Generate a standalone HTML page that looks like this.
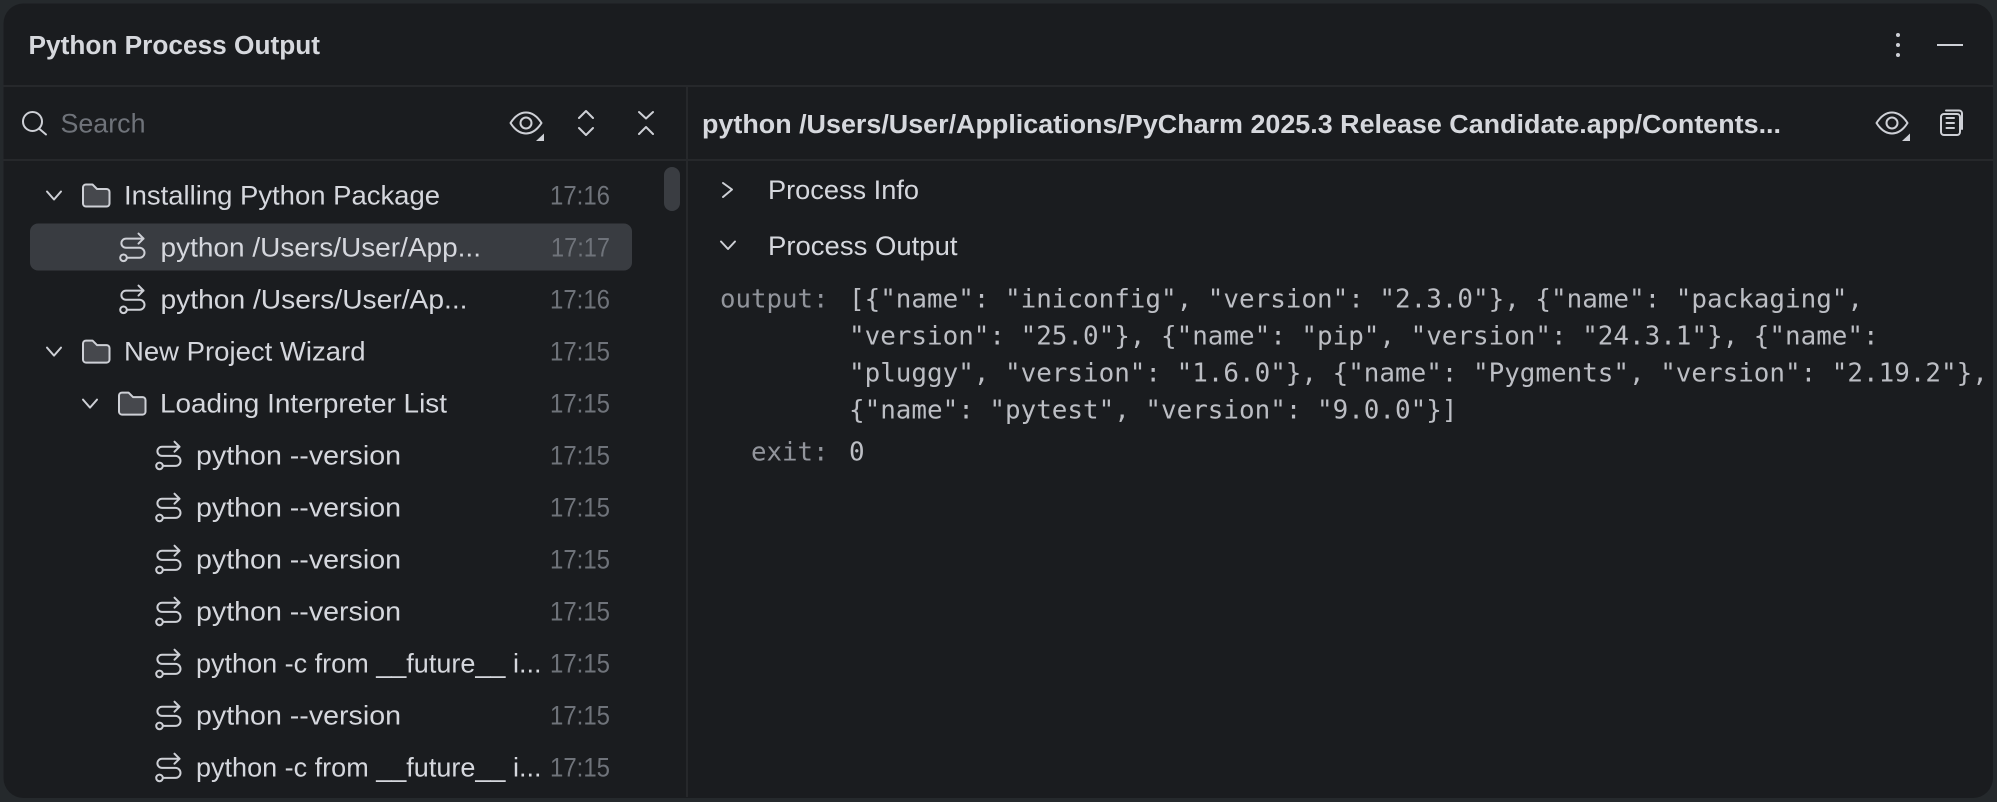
<!DOCTYPE html>
<html><head><meta charset="utf-8"><title>Python Process Output</title>
<style>
html,body{margin:0;padding:0;width:1997px;height:802px;overflow:hidden;background:#25292c}
svg{display:block}
text{font-family:"Liberation Sans",sans-serif;font-size:27px;fill:#d5d7dd;white-space:pre}
.t{fill:#6f737a}
.b{font-weight:700;fill:#d6d8dd;font-size:25.5px}
.m{font-family:"DejaVu Sans Mono",monospace;font-size:25.9px;fill:#bcbec4}
.l{fill:#92959c}
.i{fill:none;stroke:#ced0d6;stroke-width:2;stroke-linecap:round;stroke-linejoin:round}
</style></head><body>
<svg width="1997" height="802" viewBox="0 0 1997 802" xmlns="http://www.w3.org/2000/svg">
<defs>
<g id="folder"><path d="M86 -20H92.500L97 -15.500H106.500a3 3 0 0 1 3 3V-1a3 3 0 0 1 -3 3H86a3 3 0 0 1 -3 -3V-17a3 3 0 0 1 3 -3Z" fill="#46484d" stroke="#ced0d6" stroke-width="2" stroke-linejoin="round"/></g>
<g id="chev"><path class="i" d="M47 -13L54 -5L61 -13"/></g>
<g id="proc"><path class="i" d="M143.500 -18H126a4.600 4.600 0 0 0 0 9.200H139.500a5 5 0 0 1 0 10H127"/><path class="i" d="M138.500 -23L143.500 -18L138.500 -13"/><circle class="i" cx="123.500" cy="1.200" r="3.300"/></g>
<g id="eye"><path class="i" d="M-15.500 0C-11 -7 -6 -10.500 0 -10.500S11 -7 15.500 0C11 7 6 10.500 0 10.500S-11 7 -15.500 0Z"/><circle class="i" cx="0" cy="0" r="5.500"/><path d="M18 10.500V18H10Z" fill="#ced0d6"/></g>
</defs>

<rect x="3.500" y="3.500" width="1989.500" height="794.500" rx="20" fill="#1a1c1f"/>
<rect x="3.500" y="85" width="1989.500" height="2" fill="#26282b"/>
<rect x="3.500" y="159" width="1989.500" height="2" fill="#26282b"/>
<rect x="686" y="86" width="2" height="711" fill="#26282b"/>

<text class="b" x="28.500" y="54" textLength="291.500" lengthAdjust="spacingAndGlyphs">Python Process Output</text>
<circle cx="1898" cy="35" r="2" fill="#ced0d6"/><circle cx="1898" cy="45" r="2" fill="#ced0d6"/><circle cx="1898" cy="55" r="2" fill="#ced0d6"/>
<rect x="1937" y="44" width="26" height="2" fill="#ced0d6"/>

<circle class="i" cx="32.500" cy="121.500" r="9.500"/><path class="i" d="M39.500 129L46 134.500"/>
<text class="t" x="60.500" y="132.500" textLength="85" lengthAdjust="spacingAndGlyphs">Search</text>
<use href="#eye" x="526" y="123"/>
<path class="i" d="M579 118L586 111L593 118M579 128L586 135L593 128"/>
<path class="i" d="M639 112L646 118.500L653 112M639 134L646 127L653 134"/>

<text class="b" x="702" y="133" textLength="1079" lengthAdjust="spacingAndGlyphs">python /Users/User/Applications/PyCharm 2025.3 Release Candidate.app/Contents...</text>
<use href="#eye" x="1892" y="123"/>
<rect class="i" x="1941" y="114" width="19" height="21" rx="3"/>
<path class="i" d="M1946 110.500H1959a3 3 0 0 1 3 3V129M1946.500 118H1954M1946.500 123H1954M1946.500 128H1954"/>

<rect x="30" y="223.500" width="602" height="47" rx="8" fill="#393c41"/>
<rect x="664" y="167" width="16" height="44" rx="8" fill="#3a3d42"/>

<use href="#chev" y="204.500"/><use href="#folder" y="204.500"/>
<text x="124" y="204.500" textLength="316" lengthAdjust="spacingAndGlyphs">Installing Python Package</text>
<text class="t" x="550" y="204.500" textLength="60" lengthAdjust="spacingAndGlyphs">17:16</text>

<use href="#proc" y="256.600"/>
<text x="160.500" y="256.600" textLength="320.500" lengthAdjust="spacingAndGlyphs">python /Users/User/App...</text>
<text class="t" x="551" y="256.600" textLength="59" lengthAdjust="spacingAndGlyphs">17:17</text>

<use href="#proc" y="308.600"/>
<text x="160.500" y="308.600" textLength="307" lengthAdjust="spacingAndGlyphs">python /Users/User/Ap...</text>
<text class="t" x="550" y="308.600" textLength="60" lengthAdjust="spacingAndGlyphs">17:16</text>

<use href="#chev" y="360.600"/><use href="#folder" y="360.600"/>
<text x="124" y="360.600" textLength="241.500" lengthAdjust="spacingAndGlyphs">New Project Wizard</text>
<text class="t" x="550" y="360.600" textLength="60" lengthAdjust="spacingAndGlyphs">17:15</text>

<use href="#chev" x="36" y="412.600"/><use href="#folder" x="36" y="412.600"/>
<text x="160" y="412.600" textLength="287" lengthAdjust="spacingAndGlyphs">Loading Interpreter List</text>
<text class="t" x="550" y="412.600" textLength="60" lengthAdjust="spacingAndGlyphs">17:15</text>

<use href="#proc" x="36" y="464.700"/>
<text x="196" y="464.700" textLength="205" lengthAdjust="spacingAndGlyphs">python --version</text>
<text class="t" x="550" y="464.700" textLength="60" lengthAdjust="spacingAndGlyphs">17:15</text>

<use href="#proc" x="36" y="516.700"/>
<text x="196" y="516.700" textLength="205" lengthAdjust="spacingAndGlyphs">python --version</text>
<text class="t" x="550" y="516.700" textLength="60" lengthAdjust="spacingAndGlyphs">17:15</text>

<use href="#proc" x="36" y="568.700"/>
<text x="196" y="568.700" textLength="205" lengthAdjust="spacingAndGlyphs">python --version</text>
<text class="t" x="550" y="568.700" textLength="60" lengthAdjust="spacingAndGlyphs">17:15</text>

<use href="#proc" x="36" y="620.700"/>
<text x="196" y="620.700" textLength="205" lengthAdjust="spacingAndGlyphs">python --version</text>
<text class="t" x="550" y="620.700" textLength="60" lengthAdjust="spacingAndGlyphs">17:15</text>

<use href="#proc" x="36" y="672.700"/>
<text x="196" y="672.700" textLength="345.500" lengthAdjust="spacingAndGlyphs">python -c from __future__ i...</text>
<text class="t" x="550" y="672.700" textLength="60" lengthAdjust="spacingAndGlyphs">17:15</text>

<use href="#proc" x="36" y="724.700"/>
<text x="196" y="724.700" textLength="205" lengthAdjust="spacingAndGlyphs">python --version</text>
<text class="t" x="550" y="724.700" textLength="60" lengthAdjust="spacingAndGlyphs">17:15</text>

<use href="#proc" x="36" y="776.700"/>
<text x="196" y="776.700" textLength="345.500" lengthAdjust="spacingAndGlyphs">python -c from __future__ i...</text>
<text class="t" x="550" y="776.700" textLength="60" lengthAdjust="spacingAndGlyphs">17:15</text>

<path class="i" d="M723 183L732 189.500L723 197"/>
<text x="768" y="199" textLength="151" lengthAdjust="spacingAndGlyphs">Process Info</text>
<path class="i" d="M721 241.500L728 249L735 241.500"/>
<text x="768" y="255" textLength="189.500" lengthAdjust="spacingAndGlyphs">Process Output</text>

<text class="m l" x="720" y="307.700" textLength="108.500" lengthAdjust="spacingAndGlyphs">output:</text>
<text class="m" x="849" y="307.700" textLength="1014" lengthAdjust="spacingAndGlyphs">[{"name": "iniconfig", "version": "2.3.0"}, {"name": "packaging",</text>
<text class="m" x="849" y="344.700" textLength="1029.600" lengthAdjust="spacingAndGlyphs">"version": "25.0"}, {"name": "pip", "version": "24.3.1"}, {"name":</text>
<text class="m" x="849" y="381.700" textLength="1138.800" lengthAdjust="spacingAndGlyphs">"pluggy", "version": "1.6.0"}, {"name": "Pygments", "version": "2.19.2"},</text>
<text class="m" x="849" y="418.500" textLength="608.400" lengthAdjust="spacingAndGlyphs">{"name": "pytest", "version": "9.0.0"}]</text>
<text class="m l" x="751" y="460.700" textLength="77.500" lengthAdjust="spacingAndGlyphs">exit:</text>
<text class="m" x="849" y="460.700" textLength="15.600" lengthAdjust="spacingAndGlyphs">0</text>
</svg>
</body></html>
